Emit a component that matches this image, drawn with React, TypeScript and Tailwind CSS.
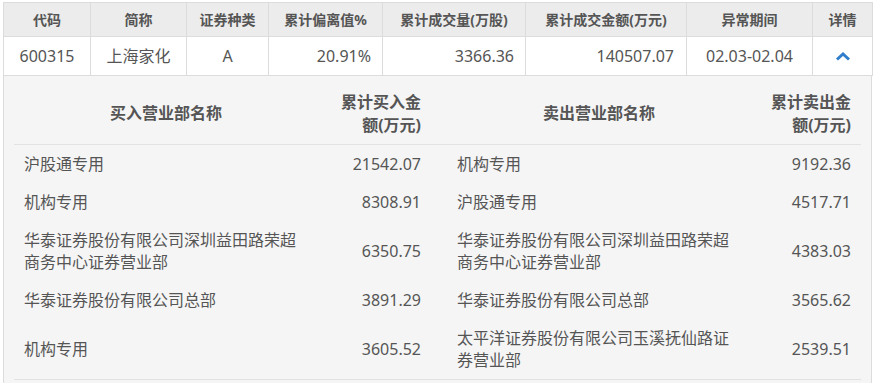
import React from 'react';

const font = "font-['Noto_Sans','Noto_Sans_CJK_SC',sans-serif]";

const summary = {
  code: '600315',
  name: '上海家化',
  kind: 'A',
  deviation: '20.91%',
  volume: '3366.36',
  amount: '140507.07',
  period: '02.03-02.04',
};

const rows = [
  { buyName: '沪股通专用', buy: '21542.07', sellName: '机构专用', sell: '9192.36' },
  { buyName: '机构专用', buy: '8308.91', sellName: '沪股通专用', sell: '4517.71' },
  {
    buyName: '华泰证券股份有限公司深圳益田路荣超商务中心证券营业部',
    buy: '6350.75',
    sellName: '华泰证券股份有限公司深圳益田路荣超商务中心证券营业部',
    sell: '4383.03',
  },
  { buyName: '华泰证券股份有限公司总部', buy: '3891.29', sellName: '华泰证券股份有限公司总部', sell: '3565.62' },
  {
    buyName: '机构专用',
    buy: '3605.52',
    sellName: '太平洋证券股份有限公司玉溪抚仙路证券营业部',
    sell: '2539.51',
  },
];

const th = 'border border-[#dcdcdc] font-bold text-[14px] text-[#555] text-center h-[34px] p-0';
const td = 'border border-[#dcdcdc] text-[16px] text-[#555] h-[39px] p-0';

export default function App() {
  return (
    <div className={`${font} bg-white min-h-screen pl-[3px] pt-[2px]`}>
      <div className="w-[869px]">
        <table className="w-[869px] table-fixed border-collapse">
          <colgroup>
            <col className="w-[87px]" />
            <col className="w-[96px]" />
            <col className="w-[82px]" />
            <col className="w-[114px]" />
            <col className="w-[143px]" />
            <col className="w-[161px]" />
            <col className="w-[126px]" />
            <col className="w-[60px]" />
          </colgroup>
          <thead>
            <tr className="bg-[#ececec]">
              <th className={th}>代码</th>
              <th className={th}>简称</th>
              <th className={th}>证券种类</th>
              <th className={th}>累计偏离值%</th>
              <th className={th}>累计成交量(万股)</th>
              <th className={th}>累计成交金额(万元)</th>
              <th className={th}>异常期间</th>
              <th className={th}>详情</th>
            </tr>
          </thead>
          <tbody>
            <tr className="bg-white">
              <td className={`${td} text-center`}>{summary.code}</td>
              <td className={`${td} text-center`}>{summary.name}</td>
              <td className={`${td} text-center`}>{summary.kind}</td>
              <td className={`${td} text-right pr-[11px]`}>{summary.deviation}</td>
              <td className={`${td} text-right pr-[11px]`}>{summary.volume}</td>
              <td className={`${td} text-right pr-[12px]`}>{summary.amount}</td>
              <td className={`${td} text-center`}>{summary.period}</td>
              <td className={`${td} text-center`}>
                <svg width="16" height="10" viewBox="0 0 16 10" className="inline-block align-middle mb-[3px]">
                  <polyline points="2,8.5 8,3 14,8.5" fill="none" stroke="#2f7dcc" strokeWidth="3" />
                </svg>
              </td>
            </tr>
          </tbody>
        </table>

        <div className="bg-[#f5f5f5] border-x border-[#dcdcdc] pt-[8px] px-[10px] pb-[10px]">
          <table className="w-[847px] table-fixed border-collapse">
            <colgroup>
              <col className="w-[304px]" />
              <col className="w-[123px]" />
              <col className="w-[310px]" />
              <col className="w-[110px]" />
            </colgroup>
            <thead>
              <tr className="border-b border-[#e2e2e2] text-[16px] font-bold text-[#555] leading-[23px]">
                <th className="h-[60px] px-[10px] text-center font-bold">买入营业部名称</th>
                <th className="h-[60px] pl-[10px] pr-[20px] text-right font-bold">累计买入金额(万元)</th>
                <th className="h-[60px] pl-[16px] pr-[10px] text-center font-bold">卖出营业部名称</th>
                <th className="h-[60px] pl-[18px] pr-[10px] text-right font-bold">累计卖出金额(万元)</th>
              </tr>
            </thead>
            <tbody className="border-b border-[#e2e2e2]">
              {rows.map((r, i) => (
                <tr key={i} className="text-[16px] text-[#555] leading-[22px]">
                  <td className="py-[8px] px-[10px] text-left">{r.buyName}</td>
                  <td className="py-[8px] pl-[10px] pr-[20px] text-right">{r.buy}</td>
                  <td className="py-[8px] pl-[16px] pr-[10px] text-left">{r.sellName}</td>
                  <td className="py-[8px] pl-[18px] pr-[10px] text-right">{r.sell}</td>
                </tr>
              ))}
            </tbody>
          </table>
        </div>
      </div>
    </div>
  );
}
